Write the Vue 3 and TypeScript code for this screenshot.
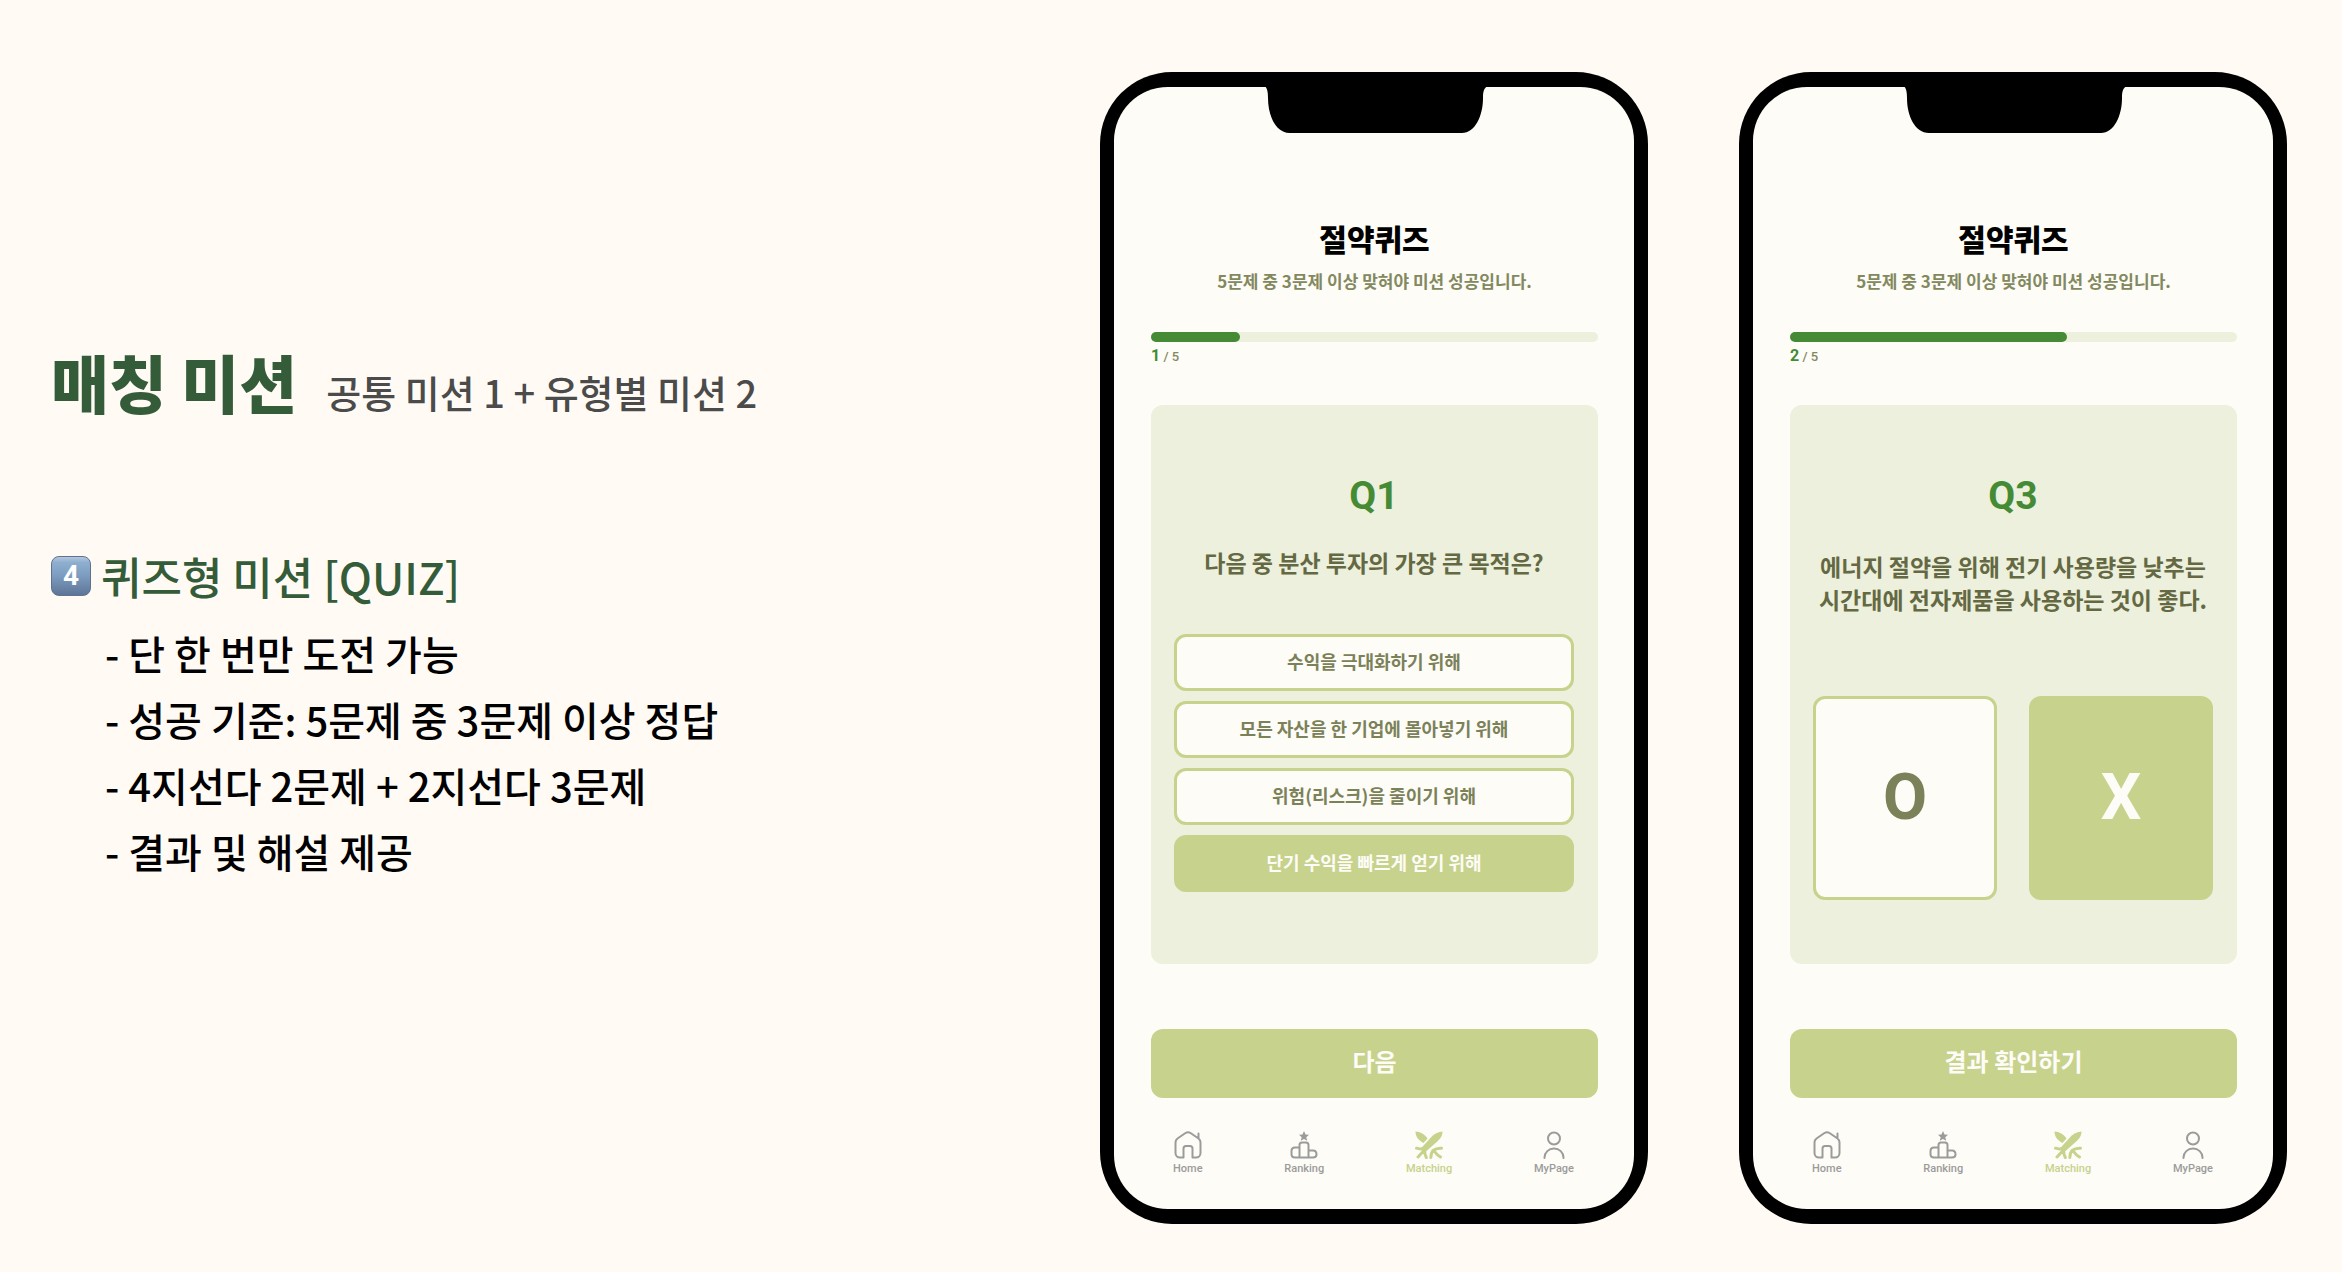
<script setup lang="ts">
import { ref } from 'vue'

interface Quiz {
  id: string
  step: number
  percent: number
  number: string
  question: string[]
  kind: 'choice' | 'ox'
  answers: string[]
  action: string
}

const rules: string[] = [
  '- 단 한 번만 도전 가능',
  '- 성공 기준: 5문제 중 3문제 이상 정답',
  '- 4지선다 2문제 + 2지선다 3문제',
  '- 결과 및 해설 제공',
]

const quizzes: Quiz[] = [
  {
    id: 'q1',
    step: 1,
    percent: 20,
    number: 'Q1',
    question: ['다음 중 분산 투자의 가장 큰 목적은?'],
    kind: 'choice',
    answers: [
      '수익을 극대화하기 위해',
      '모든 자산을 한 기업에 몰아넣기 위해',
      '위험(리스크)을 줄이기 위해',
      '단기 수익을 빠르게 얻기 위해',
    ],
    action: '다음',
  },
  {
    id: 'q3',
    step: 2,
    percent: 62,
    number: 'Q3',
    question: ['에너지 절약을 위해 전기 사용량을 낮추는', '시간대에 전자제품을 사용하는 것이 좋다.'],
    kind: 'ox',
    answers: ['O', 'X'],
    action: '결과 확인하기',
  },
]

const selected = ref<Record<string, number>>({ q1: 3, q3: 1 })
</script>

<template>
  <main class="slide">
    <section class="intro">
      <header class="heading">
        <h1>매칭 미션</h1>
        <p>공통 미션 1 + 유형별 미션 2</p>
      </header>
      <h2><span class="keycap">4</span>퀴즈형 미션 [QUIZ]</h2>
      <ul>
        <li v-for="rule in rules" :key="rule">{{ rule }}</li>
      </ul>
    </section>

    <article v-for="quiz in quizzes" :key="quiz.id" class="phone">
      <svg class="notch" viewBox="0 0 225 47" aria-hidden="true">
        <path d="M0 0C3 1 4 5 4 12C4 30 12 47 26 47H198C211 47 219 30 219 12C219 5 220 1 225 0Z" />
      </svg>
      <div class="screen">
        <h3>절약퀴즈</h3>
        <p class="subtitle">5문제 중 3문제 이상 맞혀야 미션 성공입니다.</p>
        <div class="track" role="progressbar" :aria-valuenow="quiz.step" aria-valuemin="0" aria-valuemax="5">
          <div class="fill" :style="{ width: quiz.percent + '%' }"></div>
        </div>
        <p class="count"><b>{{ quiz.step }}</b> / 5</p>

        <div class="card" :class="quiz.kind">
          <p class="number">{{ quiz.number }}</p>
          <p class="question">
            <span v-for="line in quiz.question" :key="line">{{ line }}</span>
          </p>
          <div class="answers">
            <button
              v-for="(answer, i) in quiz.answers"
              :key="answer"
              type="button"
              class="answer"
              :class="{ on: selected[quiz.id] === i }"
              :aria-pressed="selected[quiz.id] === i"
              @click="selected[quiz.id] = i"
            >
              {{ answer }}
            </button>
          </div>
        </div>

        <button type="button" class="action">{{ quiz.action }}</button>

        <nav>
          <a href="#home">
            <svg viewBox="0 0 28 28" class="line">
              <path d="M9.500 26.500H6A4.500 4.500 0 0 1 1.500 22V11.500Q1.500 9 3.500 7.500L11.500 2Q14 .5 16.500 2L24.500 7.500Q26.500 9 26.500 11.500V22A4.500 4.500 0 0 1 22 26.500H18.500V17.500Q18.500 15 16 15H12Q9.500 15 9.500 17.500V26.500M24.500 7V2.500" />
            </svg>
            Home
          </a>
          <a href="#ranking">
            <svg viewBox="0 0 28 28" class="line">
              <path d="M9.500 26.500V14Q9.500 11.500 12 11.500H16Q18.500 11.500 18.500 14V26.500M9.500 16.500H5Q1.500 16.500 1.500 20V23Q1.500 26.500 5 26.500H23Q26.500 26.500 26.500 23.500Q26.500 19.500 23 19.500H18.500" />
              <path class="solid" d="M14 0L15.500 3.500L19 3.800L16.300 6.300L17.200 9.800L14 7.900L10.800 9.800L11.700 6.300L9 3.800L12.500 3.500Z" />
            </svg>
            Ranking
          </a>
          <a href="#matching" class="current">
            <svg viewBox="0 0 28 28">
              <path class="solid" d="M.5 .5C5 .5 10 3.500 12.500 7.500L8.500 12C3.500 9.500 .5 5.500 .5 .5Z" />
              <path class="solid" d="M27.500 .5C22 1 18 3.500 15 7.500L6.500 16.800L11 20.500L20.500 12C25 8.500 27.500 5 27.500 .5Z" />
              <path class="twig" d="M1.500 17.200Q5 18.500 8.500 17.500M3 26L9.500 19M9.500 19Q9.500 23 11.300 26.500M26.500 17.200Q21.500 16.800 18 19.500Q16 22 15.800 26.500M19.500 20.500Q22 24 25.500 26" />
            </svg>
            Matching
          </a>
          <a href="#mypage">
            <svg viewBox="0 0 28 28" class="line">
              <circle cx="14" cy="7.500" r="6" />
              <path d="M4.500 27V26.500A9.500 9 0 0 1 23.500 26.500V27" />
            </svg>
            MyPage
          </a>
        </nav>
      </div>
    </article>
  </main>
</template>

<style>
body {
  margin: 0;
  background: #fffbf4;
}
</style>

<style scoped>
.slide {
  box-sizing: border-box;
  min-height: 100vh;
  padding: 72px 55px 48px 51px;
  display: grid;
  grid-template-columns: minmax(0, 1fr) minmax(0, 548px) minmax(0, 548px);
  column-gap: 91px;
  align-items: center;
  font-family: 'Noto Sans CJK KR', 'Noto Sans', sans-serif;
}

h1, h2, h3, p, ul {
  margin: 0;
}

.intro {
  padding-bottom: 72px;
  white-space: nowrap;
}

.heading {
  display: flex;
  align-items: baseline;
  gap: 29px;
}

h1 {
  font-size: 63px;
  line-height: 80px;
  font-weight: 900;
  color: #355c39;
}

.heading p {
  font-size: 38px;
  font-weight: 500;
  color: #4b4b4b;
}

h2 {
  display: flex;
  align-items: center;
  gap: 10px;
  margin-top: 127px;
  font-size: 44px;
  line-height: 56px;
  font-weight: 500;
  color: #355c39;
}

.keycap {
  width: 40px;
  height: 40px;
  border-radius: 8px;
  box-sizing: border-box;
  border: 1px solid #5f7390;
  background: linear-gradient(#b4c8dc 0%, #8fafd0 14%, #7f9fc2 45%, #5d7597 100%);
  color: #fff;
  font: 700 28px/38px Roboto, sans-serif;
  text-align: center;
}

ul {
  margin-top: 16px;
  padding-left: 54px;
  list-style: none;
  font-size: 40px;
  line-height: 66px;
  font-weight: 500;
  color: #000;
}

.phone {
  position: relative;
  box-sizing: border-box;
  padding: 15px 14px;
  border-radius: 72px;
  background: #000;
}

.notch {
  position: absolute;
  top: 14px;
  left: calc(50% - 110px);
  width: 225px;
  height: 47px;
}

.screen {
  display: flex;
  flex-direction: column;
  padding: 131px 36px 32px 37px;
  border-radius: 54px;
  background: #fdfcf7;
}

h3 {
  font-size: 30px;
  line-height: 40px;
  font-weight: 900;
  text-align: center;
  color: #000;
}

.subtitle {
  margin-top: 11px;
  font-size: 17px;
  line-height: 24px;
  font-weight: 700;
  text-align: center;
  color: #83895f;
}

.track {
  height: 10px;
  margin-top: 39px;
  border-radius: 5px;
  background: #ecf0dc;
}

.fill {
  height: 10px;
  border-radius: 5px;
  background: #458b35;
}

.count {
  margin-top: 4px;
  font: 500 13px/20px Roboto, sans-serif;
  color: #83895f;
}

.count b {
  font-size: 16px;
  color: #458b35;
}

.card {
  box-sizing: border-box;
  min-height: 559px;
  margin-top: 38px;
  padding: 71px 24px 64px 23px;
  border-radius: 12px;
  background: #ecf0dc;
  text-align: center;
}

.number {
  font: 700 39px/40px Roboto, sans-serif;
  color: #458b35;
}

.question {
  margin: 30px -12px 55px;
  font-size: 23px;
  line-height: 33px;
  font-weight: 700;
  color: #646943;
}

.ox .question {
  margin: 34px -12px 80px;
}

.question span {
  display: block;
}

.answers {
  display: grid;
  gap: 10px;
}

.ox .answers {
  grid-template-columns: 1fr 1fr;
  gap: 32px;
}

.answer {
  height: 57px;
  padding: 0 0 4px;
  border: 3px solid #c7d28c;
  border-radius: 12px;
  background: #fdfcf7;
  font: inherit;
  font-size: 18px;
  font-weight: 700;
  color: #7b8158;
}

.ox .answer {
  height: 204px;
  padding: 0;
  font: 700 64px/64px Roboto, sans-serif;
}

.answer.on {
  background: #c7d28c;
  color: #fdfcf7;
}

.action {
  height: 69px;
  margin-top: 65px;
  padding: 0 0 6px;
  border: 0;
  border-radius: 12px;
  background: #c7d28c;
  font: inherit;
  font-size: 24px;
  font-weight: 700;
  color: #fdfcf7;
}

nav {
  display: flex;
  justify-content: space-between;
  margin-top: 33px;
  padding: 0 24px 0 22px;
}

nav a {
  display: flex;
  flex-direction: column;
  align-items: center;
  gap: 2px;
  font: 500 11px/16px Roboto, sans-serif;
  color: #9b9b9b;
  text-decoration: none;
}

nav svg {
  width: 28px;
  height: 28px;
}

nav .current {
  color: #c7d28c;
}

.line,
.twig {
  fill: none;
  stroke: currentColor;
  stroke-width: 2;
  stroke-linecap: round;
  stroke-linejoin: round;
}

.twig {
  stroke-width: 3;
}

.solid {
  fill: currentColor;
  stroke: none;
}
</style>
